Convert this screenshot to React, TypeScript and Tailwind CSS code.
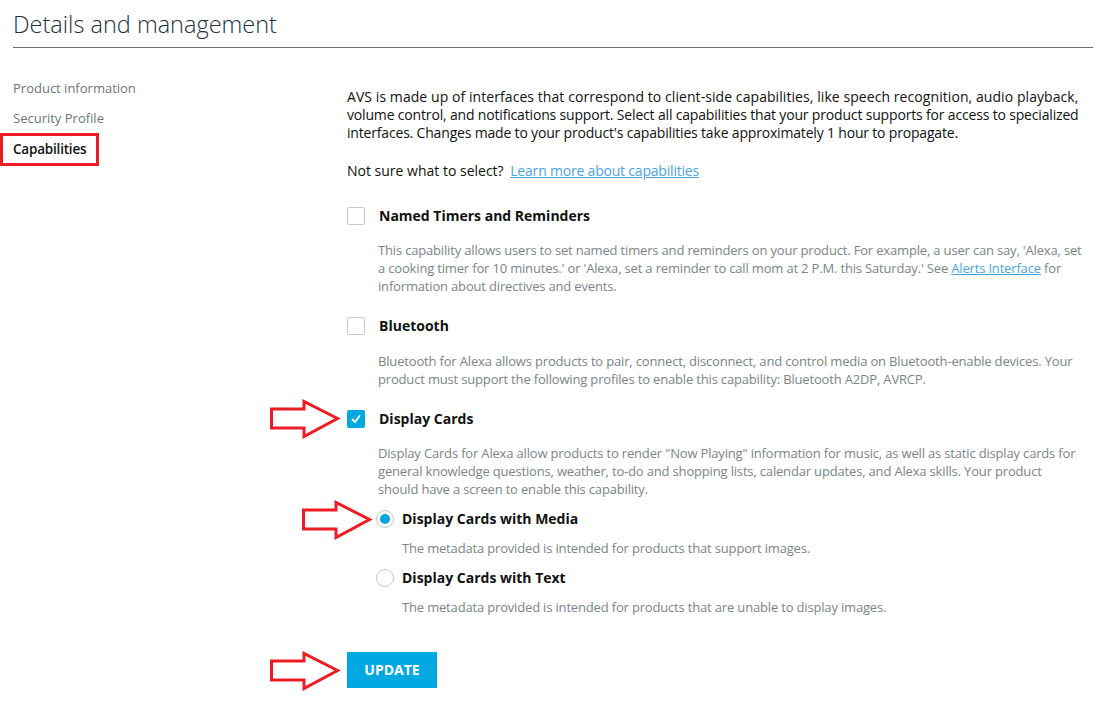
import React from "react";

function Arrow({ className }: { className: string }) {
  return (
    <svg
      className={`absolute ${className}`}
      width="72"
      height="40"
      viewBox="0 0 72 40"
    >
      <polygon
        points="2.5,10 35,10 35,2.5 68.5,19.5 35,37.5 35,29 2.5,29"
        fill="none"
        stroke="#ed1c24"
        strokeWidth="3"
        strokeLinejoin="miter"
      />
    </svg>
  );
}

function Checkbox({ checked }: { checked?: boolean }) {
  if (checked) {
    return (
      <div className="w-[18px] h-[18px] rounded-[2px] bg-[#00a8e1] flex items-center justify-center shrink-0">
        <svg width="12" height="12" viewBox="0 0 12 12">
          <path d="M2.5 6.5 L5 9 L9.5 3" fill="none" stroke="white" strokeWidth="1.8" strokeLinecap="round" strokeLinejoin="round" />
        </svg>
      </div>
    );
  }
  return <div className="w-[18px] h-[18px] rounded-[2px] border border-[#c4c8c8] bg-white shrink-0" />;
}

function Radio({ checked }: { checked?: boolean }) {
  return (
    <div className="w-[18px] h-[18px] rounded-full border border-[#c4c8c8] bg-white flex items-center justify-center shrink-0">
      {checked && <div className="w-[10px] h-[10px] rounded-full bg-[#00a8e1]" />}
    </div>
  );
}

export default function App() {
  return (
    <div
      className="relative w-[1119px] h-[705px] bg-white text-[#111] overflow-hidden"
      style={{ fontFamily: "'Open Sans', sans-serif" }}
    >
      <div className="px-[13px] pt-[8px]">
        <h1 className="text-[23.5px] font-light text-[#232f3e] leading-[32px]">Details and management</h1>
        <div className="mt-[7px] h-px bg-[#6b6b6b] w-[1080px]" />
      </div>

      <div className="flex mt-[30px]">
        <div className="w-[347px] shrink-0 text-[13px]">
          <div className="pl-[13px] h-[20px] leading-[20px] text-[#6c7778]">Product information</div>
          <div className="pl-[13px] mt-[10px] h-[20px] leading-[20px] text-[#6c7778]">Security Profile</div>
          <div className="mt-[5px] w-[99px] h-[33px] border-[3px] border-[#ed1c24] pl-[10px] flex items-center text-[#111] font-semibold text-[13.5px] tracking-[-0.2px]">
            Capabilities
          </div>
        </div>

        <div className="w-[765px] text-[14px] leading-[18px] pt-[10px]">
          <p className="text-[#111]">
            <span className="tracking-[0.07px]">
              AVS is made up of interfaces that correspond to client-side capabilities, like speech recognition, audio playback,
            </span>
            <br />
            <span className="tracking-[-0.17px]">
              volume control, and notifications support. Select all capabilities that your product supports for access to specialized
            </span>
            <br />
            <span className="tracking-[-0.18px]">
              interfaces. Changes made to your product's capabilities take approximately 1 hour to propagate.
            </span>
          </p>
          <p className="mt-[20px]">
            Not sure what to select?{" "}
            <span className="ml-[3px] text-[#4aa3df] underline tracking-[-0.2px]">Learn more about capabilities</span>
          </p>

          <div className="mt-[27px] flex items-center gap-[14px]">
            <Checkbox />
            <span className="font-bold text-[14px]">Named Timers and Reminders</span>
          </div>
          <p className="mt-[16px] ml-[31px] text-[13px] text-[#7b8585] leading-[18px] tracking-[-0.17px]">
            This capability allows users to set named timers and reminders on your product. For example, a user can say, 'Alexa, set
            <br />
            a cooking timer for 10 minutes.' or 'Alexa, set a reminder to call mom at 2 P.M. this Saturday.' See{" "}
            <span className="text-[#4aa3df] underline">Alerts Interface</span> for
            <br />
            information about directives and events.
          </p>

          <div className="mt-[22px] flex items-center gap-[14px]">
            <Checkbox />
            <span className="font-bold">Bluetooth</span>
          </div>
          <p className="mt-[17px] ml-[31px] text-[13px] text-[#7b8585] leading-[18px] tracking-[-0.17px]">
            Bluetooth for Alexa allows products to pair, connect, disconnect, and control media on Bluetooth-enable devices. Your
            <br />
            product must support the following profiles to enable this capability: Bluetooth A2DP, AVRCP.
          </p>

          <div className="mt-[22px] flex items-center gap-[14px]">
            <Checkbox checked />
            <span className="font-bold">Display Cards</span>
          </div>
          <p className="mt-[16px] ml-[31px] text-[13px] text-[#7b8585] leading-[18px] tracking-[-0.17px]">
            Display Cards for Alexa allow products to render "Now Playing" information for music, as well as static display cards for
            <br />
            general knowledge questions, weather, to-do and shopping lists, calendar updates, and Alexa skills. Your product
            <br />
            should have a screen to enable this capability.
          </p>

          <div className="ml-[29px] mt-[12px] flex items-center gap-[8px]">
            <Radio checked />
            <span className="font-bold">Display Cards with Media</span>
          </div>
          <p className="ml-[55px] mt-[11px] text-[13px] text-[#7b8585] tracking-[-0.17px]">
            The metadata provided is intended for products that support images.
          </p>
          <div className="ml-[29px] mt-[12px] flex items-center gap-[8px]">
            <Radio />
            <span className="font-bold">Display Cards with Text</span>
          </div>
          <p className="ml-[55px] mt-[11px] text-[13px] text-[#7b8585] tracking-[-0.17px]">
            The metadata provided is intended for products that are unable to display images.
          </p>

          <button className="mt-[36px] w-[90px] h-[36px] bg-[#00a8e1] text-white font-bold text-[14px]">
            UPDATE
          </button>
        </div>
      </div>

      <Arrow className="left-[269px] top-[399px]" />
      <Arrow className="left-[301px] top-[500px]" />
      <Arrow className="left-[269px] top-[651px]" />
    </div>
  );
}
